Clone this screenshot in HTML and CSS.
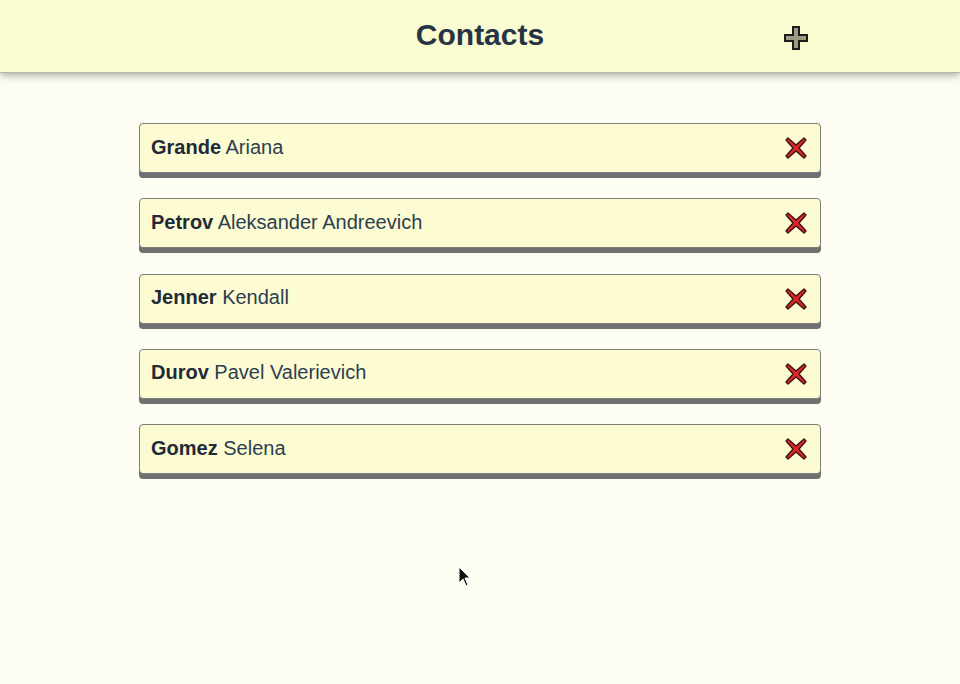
FILE: index.html
```html
<!DOCTYPE html>
<html>
<head>
<meta charset="utf-8">
<link rel="stylesheet" href="styles.css">
</head>
<body>
<header class="topbar">
  <h1 class="title">Contacts</h1>
  <button class="add-btn" aria-label="Add">
    <svg width="26" height="26" viewBox="0 0 26 26"><path d="M10 2h6v8h8v6h-8v8h-6v-8H2v-6h8z" fill="#9c9c80" stroke="#1c1c1c" stroke-width="2" stroke-linejoin="miter"/></svg>
  </button>
</header>
<main class="list">
  <div class="card"><span class="name"><b>Grande</b> Ariana</span><span class="del"><svg width="24" height="24" viewBox="0 0 24 24"><path d="M4 2l8 7 8-7 2 2-7 8 7 8-2 2-8-7-8 7-2-2 7-8-7-8z" fill="#d8282a" stroke="#3a1010" stroke-width="1.3" stroke-linejoin="round"/></svg></span></div>
  <div class="card"><span class="name"><b>Petrov</b> Aleksander Andreevich</span><span class="del"><svg width="24" height="24" viewBox="0 0 24 24"><path d="M4 2l8 7 8-7 2 2-7 8 7 8-2 2-8-7-8 7-2-2 7-8-7-8z" fill="#d8282a" stroke="#3a1010" stroke-width="1.3" stroke-linejoin="round"/></svg></span></div>
  <div class="card"><span class="name"><b>Jenner</b> Kendall</span><span class="del"><svg width="24" height="24" viewBox="0 0 24 24"><path d="M4 2l8 7 8-7 2 2-7 8 7 8-2 2-8-7-8 7-2-2 7-8-7-8z" fill="#d8282a" stroke="#3a1010" stroke-width="1.3" stroke-linejoin="round"/></svg></span></div>
  <div class="card"><span class="name"><b>Durov</b> Pavel Valerievich</span><span class="del"><svg width="24" height="24" viewBox="0 0 24 24"><path d="M4 2l8 7 8-7 2 2-7 8 7 8-2 2-8-7-8 7-2-2 7-8-7-8z" fill="#d8282a" stroke="#3a1010" stroke-width="1.3" stroke-linejoin="round"/></svg></span></div>
  <div class="card"><span class="name"><b>Gomez</b> Selena</span><span class="del"><svg width="24" height="24" viewBox="0 0 24 24"><path d="M4 2l8 7 8-7 2 2-7 8 7 8-2 2-8-7-8 7-2-2 7-8-7-8z" fill="#d8282a" stroke="#3a1010" stroke-width="1.3" stroke-linejoin="round"/></svg></span></div>
</main>
<svg class="cursor" width="14" height="22" viewBox="0 0 14 22"><path d="M1 1v16l4-4 3 7 2-1-3-7h5z" fill="#111" stroke="#fff" stroke-width="1"/></svg>
</body>
</html>
```
FILE: styles.css
```css
html, body {
  margin: 0;
  padding: 0;
}
body {
  width: 960px;
  height: 684px;
  background: #fdfdf4;
  font-family: "Liberation Sans", Arial, sans-serif;
  color: #2c3e50;
  overflow: hidden;
  position: relative;
}
.topbar {
  height: 72px;
  background: #fafbd0;
  border-bottom: 1px solid #b8b8a8;
  box-shadow: 0 2px 8px rgba(90, 90, 90, 0.55);
  position: relative;
  display: flex;
  align-items: center;
  justify-content: center;
}
.title {
  margin: 0;
  font-size: 30px;
  font-weight: bold;
  color: #263445;
  position: relative;
  top: -1px;
}
.add-btn {
  position: absolute;
  left: 783px;
  top: 25px;
  width: 26px;
  height: 26px;
  padding: 0;
  border: 0;
  background: none;
  display: block;
}
.add-btn svg { display: block; }
.list {
  width: 682px;
  margin: 50px auto 0;
  display: flex;
  flex-direction: column;
  gap: 25.25px;
}
.card {
  box-sizing: border-box;
  height: 50px;
  background: #fdfbd2;
  border: 1px solid #7c7c7c;
  border-radius: 4px;
  box-shadow: 0 5px 0 #707070;
  display: flex;
  align-items: center;
  justify-content: space-between;
  padding: 0 12px 0 11px;
}
.name {
  font-size: 20px;
  color: #2c3e50;
  position: relative;
  top: -1px;
}
.name b { color: #222a38; }
.del {
  width: 24px;
  height: 24px;
  display: block;
}
.del svg { display: block; }
.cursor {
  position: absolute;
  left: 458px;
  top: 566px;
}
```
